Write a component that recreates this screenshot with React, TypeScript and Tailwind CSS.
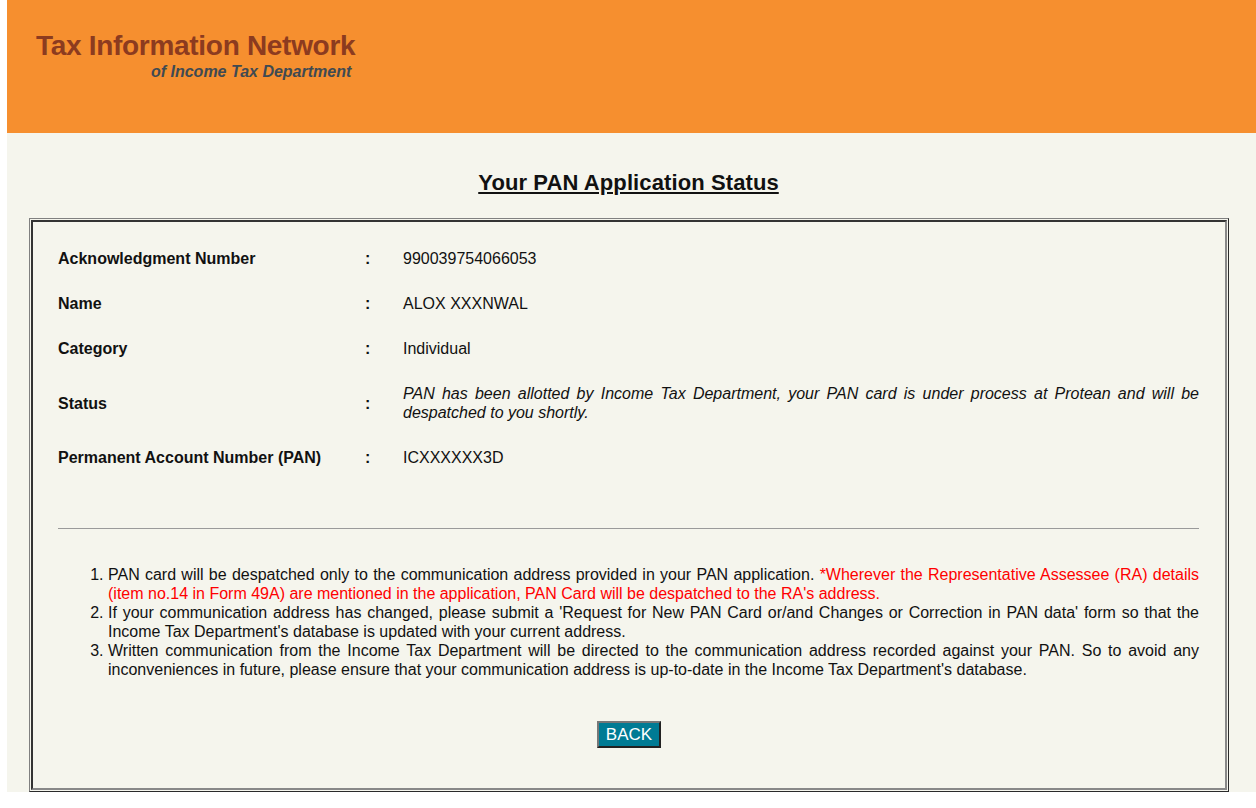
import React from "react";

const rows: { label: string; value: React.ReactNode }[] = [
  { label: "Acknowledgment Number", value: "990039754066053" },
  { label: "Name", value: "ALOX XXXNWAL" },
  { label: "Category", value: "Individual" },
  {
    label: "Status",
    value: (
      <span className="italic block text-justify">
        PAN has been allotted by Income Tax Department, your PAN card is under process at Protean and will be despatched to you shortly.
      </span>
    ),
  },
  { label: "Permanent Account Number (PAN)", value: "ICXXXXXX3D" },
];

export default function App() {
  return (
    <div
      className="w-[1256px] h-[808px] bg-white overflow-hidden"
      style={{ fontFamily: '"Liberation Sans", Arial, sans-serif' }}
    >
      <div className="ml-[7px] h-[792px] bg-[#f5f5ed] flex flex-col">
        <header className="h-[133px] shrink-0 bg-[#f68f2f] pl-[29px] pt-[30px]">
          <div className="inline-flex flex-col items-end">
            <div className="text-[28px] leading-[32px] font-bold text-[#8c3b1f] tracking-[-0.3px]">
              Tax Information Network
            </div>
            <div className="mt-[1px] text-[16px] leading-[18px] font-bold italic text-[#3f4a52] mr-[4px]">
              of Income Tax Department
            </div>
          </div>
        </header>

        <h1 className="mt-[36px] text-center text-[22px] leading-[27px] font-bold underline text-[#111] ml-[-6px] tracking-[0.1px]">
          Your PAN Application Status
        </h1>

        <div className="mt-[22px] ml-[22px] w-[1200px] flex-1 border border-t-[#808080] border-l-[#808080] border-b-[#2a2a2a] border-r-[#2a2a2a] p-px">
          <div className="h-full border-2 border-t-[#333] border-l-[#333] border-b-[#888] border-r-[#888] pl-[25px] pr-[26px] pt-[14px] flex flex-col text-[16px] leading-[19px] text-[#111]">
            <div>
              {rows.map((r) => (
                <div key={r.label} className="flex items-center py-[13px]">
                  <div className="w-[307px] shrink-0 font-bold">{r.label}</div>
                  <div className="w-[38px] shrink-0 font-bold">:</div>
                  <div className="flex-1">{r.value}</div>
                </div>
              ))}
            </div>

            <div className="mt-[48px] h-px bg-[#9a9a9a]" />

            <ol className="mt-[36px] list-decimal pl-[50px] text-justify">
              <li>
                PAN card will be despatched only to the communication address provided in your PAN application.{" "}
                <span className="text-[#ff0000]">
                  *Wherever the Representative Assessee (RA) details (item no.14 in Form 49A) are mentioned in the application, PAN Card will be despatched to the RA's address.
                </span>
              </li>
              <li>
                If your communication address has changed, please submit a 'Request for New PAN Card or/and Changes or Correction in PAN data' form so that the Income Tax Department's database is updated with your current address.
              </li>
              <li>
                Written communication from the Income Tax Department will be directed to the communication address recorded against your PAN. So to avoid any inconveniences in future, please ensure that your communication address is up-to-date in the Income Tax Department's database.
              </li>
            </ol>

            <div className="mt-[42px] flex justify-center">
              <button className="h-[27px] px-[7px] bg-[#007b94] text-white text-[17px] leading-[20px] border-2 border-t-[#777] border-l-[#777] border-b-[#222] border-r-[#222] ml-[1px]">
                BACK
              </button>
            </div>
          </div>
        </div>
      </div>
    </div>
  );
}
